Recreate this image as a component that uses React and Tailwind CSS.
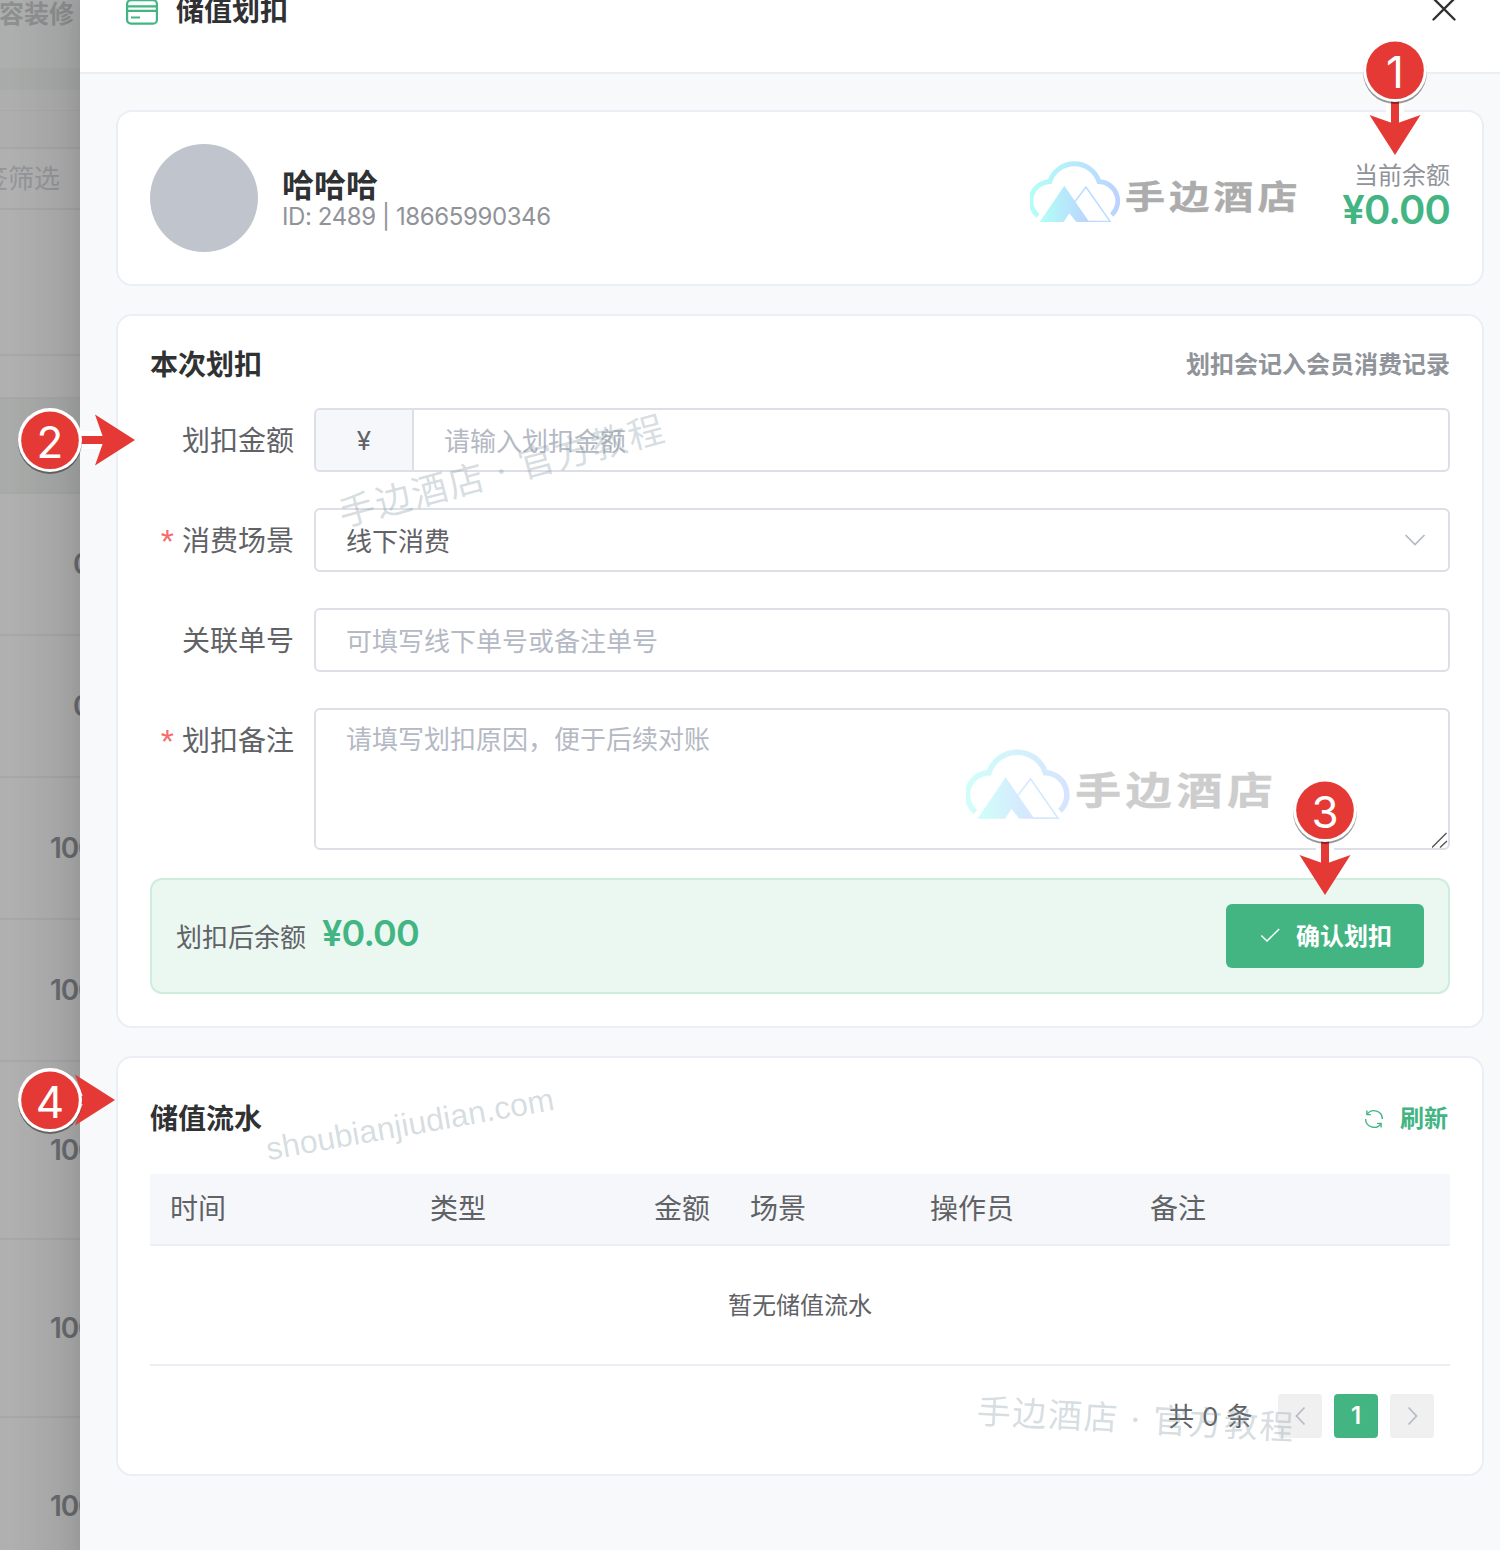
import clsx from "clsx"

const COLUMNS = [
  { label: "时间", className: "w-[260px]" },
  { label: "类型", className: "w-[200px]" },
  { label: "金额", className: "w-[120px] text-right" },
  { label: "场景", className: "w-[180px]" },
  { label: "操作员", className: "w-[220px]" },
  { label: "备注", className: "flex-1" },
]

const PINS = [
  { n: 1, x: 1395, y: 70, angle: 90, length: 85 },
  { n: 2, x: 50, y: 440, angle: 0, length: 85 },
  { n: 3, x: 1325, y: 810, angle: 90, length: 85 },
  { n: 4, x: 50, y: 1100, angle: 0, length: 65 },
]

// Members table that stays visible under the mask, left of the drawer
function Backdrop() {
  return (
    <div className="w-20 shrink-0 overflow-hidden bg-[#b3b3b3] text-[28px] font-semibold text-[#6c6e73]">
      <div className="flex h-[68px] justify-end bg-[#b0b1b1] pr-[6px] text-[25px] leading-[28px] whitespace-nowrap text-[#8f9192]">
        内容装修
      </div>
      <div className="h-[22px] bg-[#abaeac]" />
      <div className="h-[57px] bg-[#b1b1b1] pt-5">
        <div className="h-px bg-[#acacac]" />
      </div>
      <div className="flex h-[63px] items-center justify-end border-y-2 border-[#a8aaae] pr-5 text-[26px] font-normal whitespace-nowrap text-[#96989c]">
        标签筛选
      </div>
      <div className="h-[146px] border-b-2 border-[#aaabad]" />
      <div className="h-[41px]" />
      <div className="h-[97px] border-y-2 border-[#a7acaa] bg-[#abaeac]" />
      <BackdropRow className="h-[142px] pl-[73px]" value="0" />
      <BackdropRow className="h-[142px] pl-[73px]" value="0" />
      <BackdropRow className="h-[142px] pl-[50px]" value="100" />
      <BackdropRow className="h-[142px] pl-[50px]" value="100" />
      <BackdropRow className="h-[178px] pl-[50px]" value="100" />
      <BackdropRow className="h-[178px] pl-[50px]" value="100" />
      <BackdropRow className="h-[178px] pl-[50px]" value="100" />
    </div>
  )
}

function BackdropRow({ className, value }) {
  return (
    <div className={clsx("flex items-center border-b-2 border-[#aaabad] tracking-[-1.2px]", className)}>{value}</div>
  )
}

function Card({ className, children }) {
  return (
    <section className={clsx("rounded-2xl border-2 border-[#ebeef5] bg-white px-8", className)}>{children}</section>
  )
}

function FormRow({ label, required, className, children }) {
  return (
    <div className={clsx("flex", className)}>
      <div className="flex h-16 w-[164px] shrink-0 items-center justify-end pt-0.5 pr-5 text-[28px] whitespace-nowrap text-[#606266]">
        {required && <span className="mr-2 font-['Liberation_Sans'] text-[34px] leading-[28px] text-[#f56c6c]">*</span>}
        {label}
      </div>
      {children}
    </div>
  )
}

function CreditCardIcon() {
  return (
    <svg className="mt-px h-[26px] w-8" viewBox="0 0 32 26" fill="none" stroke="#42b583" strokeWidth="2.2">
      <rect x="1.1" y="1.1" width="29.8" height="23.6" rx="3.8" />
      <path d="M1 7.4h30M1 11.9h30M5 18.5h9" />
    </svg>
  )
}

function RefreshIcon() {
  return (
    <svg className="h-5 w-5" viewBox="0 0 20 20" fill="none" stroke="#42b583" strokeWidth="1.4">
      <path d="M3.2 5.2A8.4 8.4 0 0 1 18.4 10M16.8 14.8A8.4 8.4 0 0 1 1.6 10" />
      <path d="M2.9 1.6v4h4M17.1 18.4v-4h-4" />
    </svg>
  )
}

function BrandMark({ id, className, textFill }) {
  return (
    <svg className={className} viewBox="0 0 270 62">
      <defs>
        <linearGradient id={id} gradientUnits="userSpaceOnUse" x1="0" y1="30" x2="90" y2="36">
          <stop offset="0" stopColor="#b2fff7" />
          <stop offset="1" stopColor="#bcd2ff" />
        </linearGradient>
        <linearGradient id={`${id}-peak`} gradientUnits="userSpaceOnUse" x1="10" y1="50" x2="60" y2="50">
          <stop offset="0" stopColor="#b2fff7" />
          <stop offset="1" stopColor="#bcd2ff" />
        </linearGradient>
      </defs>
      <path
        d="M8 55A19.3 19.3 0 0 1 19.7 20.7A25.9 25.9 0 0 1 69 20.7A19.3 19.3 0 0 1 81.7 54"
        fill="none"
        stroke={`url(#${id})`}
        strokeWidth="4.8"
      />
      <path d="M9.7 61L34.3 24.7L59.3 61H46.3L39.3 52.3L33.7 61Z" fill={`url(#${id}-peak)`} />
      <path d="M45 40.5L56 26L80 60.4H58" fill="none" stroke="#b8dcff" strokeWidth="1.4" />
      <text
        transform="translate(95 48) scale(1 .82)"
        fontSize="40"
        fontWeight="700"
        letterSpacing="4.2"
        fill={textFill}
        stroke={textFill}
        strokeWidth=".5"
      >
        手边酒店
      </text>
    </svg>
  )
}

function Watermark({ className, children }) {
  return (
    <span
      className={clsx(
        "pointer-events-none absolute -translate-x-1/2 -translate-y-1/2 whitespace-nowrap text-[#8296a0]/32",
        className
      )}
    >
      {children}
    </span>
  )
}

function Pin({ n, x, y, angle, length }) {
  return (
    <g transform={`translate(${x} ${y})`}>
      <g transform={`rotate(${angle})`}>
        <path d={`M0 0H${length - 31}`} stroke="#fff" strokeWidth="18" />
        <path d={`M0 0H${length - 30}`} stroke="#e53935" strokeWidth="8" />
        <path d={`M${length} 0L${length - 40} -25.5L${length - 31} 0L${length - 40} 25.5Z`} fill="#e53935" />
      </g>
      <circle cy="2" r="32" fill="#000" fillOpacity=".4" />
      <circle r="32" fill="#fff" />
      <circle cy=".3" r="28.8" fill="#e53935" />
      <text y="18" textAnchor="middle" fontSize="44" fill="#fff">
        {n}
      </text>
    </g>
  )
}

function DrawerHeader() {
  return (
    <header className="flex h-[124px] items-center border-b-2 border-[#ebeef5] bg-white pr-11 pl-[46px]">
      <CreditCardIcon />
      <h1 className="ml-[18px] flex-1 text-[28px] font-bold text-[#303133]">储值划扣</h1>
      <svg className="mt-[-4px] h-6 w-6" viewBox="0 0 24 24" stroke="#303133" strokeWidth="2.4" strokeLinecap="round">
        <path d="M1.5 1.5l21 21M22.5 1.5l-21 21" />
      </svg>
    </header>
  )
}

function MemberCard() {
  return (
    <Card className="flex h-44 items-center">
      <div className="h-[108px] w-[108px] rounded-full bg-[#c0c4cc]" />
      <div className="mt-0.5 ml-6 flex-1">
        <p className="text-[32px] leading-[36px] font-bold text-[#303133]">哈哈哈</p>
        <p className="text-[24px] leading-[26px] tracking-[-0.4px] text-[#909399]">ID: 2489 | 18665990346</p>
      </div>
      <BrandMark id="brand-top" className="mt-[-12px] h-[62px] w-[270px]" textFill="#acacac" />
      <div className="mt-[-4px] w-[150px] text-right">
        <p className="text-[24px] leading-[28px] text-[#909399]">当前余额</p>
        <p className="text-[40px] leading-[40px] font-semibold tracking-[-0.9px] text-[#42b583]">¥0.00</p>
      </div>
    </Card>
  )
}

function DeductCard() {
  const field = "rounded-md border-2 border-[#dcdfe6] bg-white text-[26px] text-[#606266]"
  return (
    <Card className="mt-7 h-[714px] pt-8">
      <div className="mb-7 flex h-8 items-center justify-between pt-0.5">
        <h2 className="text-[28px] font-bold text-[#303133]">本次划扣</h2>
        <span className="text-[24px] font-bold text-[#909399]">划扣会记入会员消费记录</span>
      </div>
      <div className="flex flex-col gap-9">
        <FormRow label="划扣金额">
          <div className={clsx("flex h-16 flex-1 overflow-hidden", field)}>
            <span className="flex w-[98px] items-center justify-center border-r-2 border-[#dcdfe6] bg-[#f5f7fa]">¥</span>
            <input className="flex-1 px-[30px] pt-0.5 placeholder:text-[#b4b9c4]" placeholder="请输入划扣金额" />
          </div>
        </FormRow>
        <FormRow label="消费场景" required>
          <div className={clsx("flex h-16 flex-1 items-center justify-between pr-[22px] pl-[30px]", field)}>
            <span className="pt-0.5">线下消费</span>
            <svg className="h-3.5 w-[22px]" viewBox="0 0 22 14" fill="none" stroke="#b4b9c4" strokeWidth="1.7">
              <path d="M1.5 2L11 11.5L20.5 2" />
            </svg>
          </div>
        </FormRow>
        <FormRow label="关联单号">
          <input
            className={clsx("h-16 flex-1 px-[30px] pt-0.5 placeholder:text-[#b4b9c4]", field)}
            placeholder="可填写线下单号或备注单号"
          />
        </FormRow>
        <FormRow label="划扣备注" required>
          <div className="relative flex h-[142px] flex-1">
            <textarea
              className={clsx("flex-1 resize-none px-[30px] pt-2.5 leading-[39px] placeholder:text-[#b4b9c4]", field)}
              placeholder="请填写划扣原因，便于后续对账"
            />
            <svg className="absolute right-0.5 bottom-0.5 h-4 w-4" viewBox="0 0 16 16" stroke="#555" strokeWidth="1.4">
              <path d="M0 15.5L14.5 1M8 15.5L15 9" />
            </svg>
          </div>
        </FormRow>
      </div>
      <div className="mt-7 flex h-[116px] items-center rounded-xl border-2 border-[#cdeedd] bg-[#ebf8f2] px-6">
        <span className="pt-0.5 text-[26px] text-[#606266]">划扣后余额</span>
        <span className="mb-1.5 ml-4 flex-1 text-[36px] font-semibold tracking-[-0.8px] text-[#42b583]">¥0.00</span>
        <button
          type="button"
          className="flex h-16 w-[198px] items-center justify-center gap-4 rounded-md bg-[#42b583] pt-px pl-0.5 text-[24px] font-bold text-white"
        >
          <svg className="-mt-1 h-5 w-5" viewBox="0 0 20 20" fill="none" stroke="#fff" strokeWidth="1.5">
            <path d="M1.3 10.5L7 16L19.2 4" />
          </svg>
          确认划扣
        </button>
      </div>
    </Card>
  )
}

function FlowCard() {
  return (
    <Card className="mt-7 h-[420px]">
      <div className="flex h-[116px] items-center justify-between pt-[5px]">
        <h2 className="text-[28px] font-bold text-[#303133]">储值流水</h2>
        <button type="button" className="flex items-center gap-4 pr-0.5 text-[24px] font-bold text-[#42b583]">
          <RefreshIcon />
          刷新
        </button>
      </div>
      <div className="flex h-[72px] items-center border-b-2 border-[#ebeef5] bg-[#f5f7fa] text-[28px] text-[#606266]">
        {COLUMNS.map((col) => (
          <div key={col.label} className={clsx("px-5", col.className)}>
            {col.label}
          </div>
        ))}
      </div>
      <div className="flex h-[120px] items-center justify-center border-b-2 border-[#ebeef5] pt-0.5 text-[24px] text-[#606266]">
        暂无储值流水
      </div>
      <div className="mt-7 flex h-11 items-center justify-end gap-3 pr-4 text-[26px] text-[#606266]">
        <span className="mr-[13px] pt-px tracking-[0.4px]">共 0 条</span>
        <PagerArrow d="M9.5 1.5L1.5 10L9.5 18.5" />
        <span className="flex h-11 w-11 items-center justify-center rounded bg-[#42b583] text-[24px] font-semibold text-white">
          1
        </span>
        <PagerArrow d="M1.5 1.5L9.5 10L1.5 18.5" />
      </div>
    </Card>
  )
}

function PagerArrow({ d }) {
  return (
    <button type="button" className="flex h-11 w-11 items-center justify-center rounded bg-[#f0f0f0]">
      <svg className="h-5 w-[11px]" viewBox="0 0 11 20" fill="none" stroke="#b8bcc6" strokeWidth="1.8">
        <path d={d} />
      </svg>
    </button>
  )
}

export default function App() {
  return (
    <div className="relative flex h-[1550px] w-[1500px] overflow-hidden font-['Inter','Noto_Sans_CJK_SC',sans-serif]">
      <Backdrop />
      <main className="relative mt-[-50px] h-[1640px] flex-1 bg-[#f8f9fb] shadow-[0_32px_96px_32px_rgba(0,0,0,0.08),0_24px_64px_rgba(0,0,0,0.12),0_16px_32px_-16px_rgba(0,0,0,0.16)]">
        <DrawerHeader />
        <div className="py-9 pr-4 pl-9">
          <MemberCard />
          <DeductCard />
          <FlowCard />
        </div>
      </main>

      <BrandMark
        id="brand-form"
        className="pointer-events-none absolute top-[749px] left-[966px] h-[71px] w-[310px] opacity-60"
        textFill="#acacac"
      />
      <Watermark className="top-[471px] left-[502px] rotate-[-15deg] text-[36px] tracking-[1.6px]">
        手边酒店 · 官方教程
      </Watermark>
      <Watermark className="top-[1124px] left-[410px] rotate-[-10deg] font-['Liberation_Sans'] text-[32px]">
        shoubianjiudian.com
      </Watermark>
      <Watermark className="top-[1419px] left-[1136px] rotate-3 text-[34px] tracking-[1.6px]">
        手边酒店 · 官方教程
      </Watermark>
      <svg className="pointer-events-none absolute inset-0 h-full w-full" viewBox="0 0 1500 1550">
        {PINS.map((pin) => (
          <Pin key={pin.n} {...pin} />
        ))}
      </svg>
    </div>
  )
}
